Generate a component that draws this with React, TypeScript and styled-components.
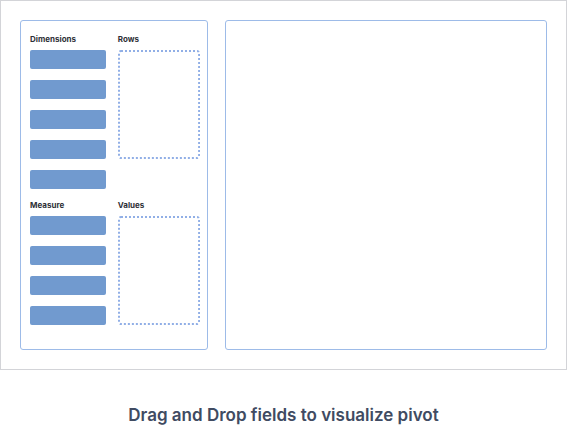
import React from "react";
import styled, { createGlobalStyle } from "styled-components";

const GlobalStyle = createGlobalStyle`
  *, *::before, *::after { box-sizing: border-box; }
  body {
    margin: 0;
    background: #fff;
    font-family: Inter, "Liberation Sans", sans-serif;
  }
`;

const Frame = styled.section`
  display: grid;
  grid-template-columns: minmax(0, 7fr) minmax(0, 12fr);
  gap: 17px;
  padding: 19px;
  border: 1px solid #d3d4d8;
`;

const Panel = styled.div`
  border: 1px solid #9dbbe8;
  border-radius: 3px;
`;

const FieldPanel = styled(Panel)`
  display: grid;
  grid-template-columns: 12fr 13fr;
  column-gap: 12px;
  row-gap: 11px;
  padding: 13px 7px 24px 9px;
`;

const Group = styled.div`
  display: flex;
  flex-direction: column;
  gap: 6px;
`;

const GroupTitle = styled.h2`
  margin: 0;
  color: #2e2f36;
  font-size: 8px;
  font-weight: 700;
  line-height: 10px;
`;

const FieldList = styled.ul`
  display: flex;
  flex-direction: column;
  gap: 11px;
  margin: 0;
  padding: 0;
  list-style: none;
`;

const Field = styled.li`
  height: 19px;
  border-radius: 2px;
  background: #719acf;
`;

const DropZone = styled.div`
  height: 109px;
`;

const Outline = styled.svg`
  display: block;
  width: 100%;
  height: 100%;
  overflow: hidden;

  rect {
    x: 1px;
    y: 1px;
    width: calc(100% - 2px);
    height: calc(100% - 2px);
    rx: 2px;
    fill: none;
    stroke: #91afe6;
    stroke-width: 2px;
    stroke-dasharray: 2 2;
  }
`;

const Caption = styled.p`
  margin: 0;
  padding: 33px 16px 6px;
  color: #404b62;
  font-size: 17px;
  font-weight: 600;
  line-height: 24px;
  text-align: center;
`;

const rows = [
  { source: "Dimensions", count: 5, target: "Rows" },
  { source: "Measure", count: 4, target: "Values" },
];

export default function App() {
  return (
    <>
      <GlobalStyle />
      <main>
        <Frame>
          <FieldPanel>
            {rows.map(({ source, count, target }) => (
              <React.Fragment key={source}>
                <Group>
                  <GroupTitle>{source}</GroupTitle>
                  <FieldList>
                    {Array.from({ length: count }, (_, i) => (
                      <Field key={i} />
                    ))}
                  </FieldList>
                </Group>
                <Group>
                  <GroupTitle>{target}</GroupTitle>
                  <DropZone>
                    <Outline aria-hidden="true">
                      <rect />
                    </Outline>
                  </DropZone>
                </Group>
              </React.Fragment>
            ))}
          </FieldPanel>
          <Panel />
        </Frame>
        <Caption>Drag and Drop fields to visualize pivot</Caption>
      </main>
    </>
  );
}
